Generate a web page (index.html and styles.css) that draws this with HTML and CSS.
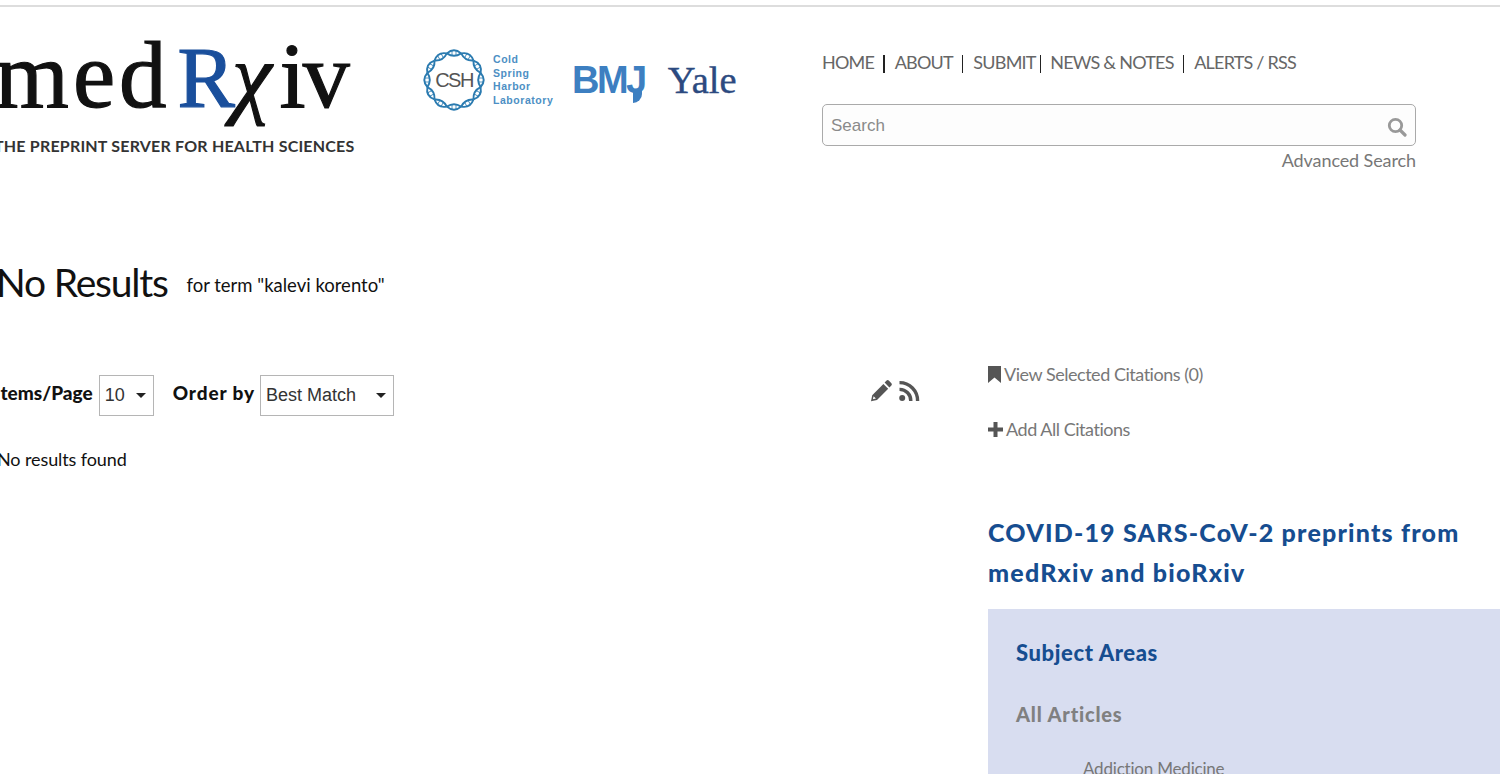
FILE: index.html
```html
<!DOCTYPE html>
<html lang="en">
<head>
<meta charset="utf-8">
<title>medRxiv search</title>
<link rel="stylesheet" href="styles.css">
</head>
<body>
<div class="page">
  <header class="header">
    <div class="logo">
      <div class="wordmark"><span class="wm-med">med</span><span class="wm-r">R</span><span class="wm-chi">χ</span><span class="wm-iv">iv</span></div>
      <div class="tagline">THE PREPRINT SERVER FOR HEALTH SCIENCES</div>
    </div>
    <div class="partners">
      <svg class="csh-ring" width="64" height="64" viewBox="-32 -32 64 64" aria-hidden="true">
        <defs>
          <g id="eye" fill="none" stroke="#2b7bb0" stroke-width="1.9">
            <path d="M-7.1 -26.6Q0 -32.8 7.1 -26.6"/>
            <path d="M-7.1 -26.6Q0 -21.8 7.1 -26.6"/>
            <path d="M-2 -29.2V-24.6M2 -29.2V-24.6" stroke-width=".8"/>
          </g>
        </defs>
        <use href="#eye"/><use href="#eye" transform="rotate(30)"/><use href="#eye" transform="rotate(60)"/>
        <use href="#eye" transform="rotate(90)"/><use href="#eye" transform="rotate(120)"/><use href="#eye" transform="rotate(150)"/>
        <use href="#eye" transform="rotate(180)"/><use href="#eye" transform="rotate(210)"/><use href="#eye" transform="rotate(240)"/>
        <use href="#eye" transform="rotate(270)"/><use href="#eye" transform="rotate(300)"/><use href="#eye" transform="rotate(330)"/>
        <text class="csh-text" x="0" y="7" text-anchor="middle">CSH</text>
      </svg>
      <div class="csh-name">Cold<br>Spring<br>Harbor<br>Laboratory</div>
      <div class="bmj">BMJ</div>
      <div class="yale">Yale</div>
    </div>
    <div class="tools">
      <nav class="nav">
        <a>HOME</a><i class="sep sep-a"></i>
        <a>ABOUT</a><i class="sep sep-a"></i>
        <a>SUBMIT</a><i class="sep sep-b"></i>
        <a>NEWS &amp; NOTES</a><i class="sep sep-a"></i>
        <a>ALERTS / RSS</a>
      </nav>
      <div class="search">
        <input class="search-input" type="text" placeholder="Search">
        <svg class="search-icon" width="20" height="20" viewBox="0 0 20 20" aria-hidden="true">
          <circle cx="8.500" cy="8.500" r="6.200" fill="none" stroke="#999" stroke-width="2.800"/>
          <path d="M13 13l5 5" stroke="#999" stroke-width="3.200" stroke-linecap="round"/>
        </svg>
      </div>
      <a class="advanced">Advanced Search</a>
    </div>
  </header>

  <h1 class="title">No Results <small class="term">for term "kalevi korento"</small></h1>

  <div class="columns">
    <main class="results">
      <div class="toolbar">
        <label class="field-label">Items/Page</label>
        <div class="select select-num"><span>10</span><i class="caret"></i></div>
        <label class="field-label order">Order by</label>
        <div class="select select-order"><span>Best Match</span><i class="caret"></i></div>
        <div class="feeds">
          <svg width="23" height="23" viewBox="0 0 23 23" aria-hidden="true">
            <path fill="#555" d="M16.600 1.600a1.600 1.600 0 0 1 2.200 0l2.600 2.600a1.600 1.600 0 0 1 0 2.200l-2 2-4.800-4.800zM13.400 5l4.800 4.800L7 21l-6 1.200L2.200 16.200zM3.600 17.200l-.7 3 3-.7z"/>
          </svg>
          <svg width="22" height="22" viewBox="0 0 22 22" aria-hidden="true">
            <circle cx="4.200" cy="18" r="3" fill="#555"/>
            <path d="M1.500 9.400A11.200 11.200 0 0 1 12.800 21" fill="none" stroke="#555" stroke-width="3.400"/>
            <path d="M1.500 2.600A18 18 0 0 1 19.600 21" fill="none" stroke="#555" stroke-width="3.400"/>
          </svg>
        </div>
      </div>
      <p class="empty">No results found</p>
    </main>
    <aside class="side">
      <a class="cite">
        <svg width="13" height="17" viewBox="0 0 13 17" aria-hidden="true"><path fill="#555" d="M0 0h13v17L6.500 11.500 0 17z"/></svg>
        View Selected Citations (0)
      </a>
      <a class="cite cite-add">
        <svg width="15" height="15" viewBox="0 0 15 15" aria-hidden="true"><path fill="#555" d="M5.500 0h4v5.500H15v4H9.500V15h-4V9.500H0v-4h5.500z"/></svg>
        Add All Citations
      </a>
      <h2 class="covid">COVID-19 SARS-CoV-2 preprints from medRxiv and bioRxiv</h2>
      <section class="panel">
        <h3 class="panel-title">Subject Areas</h3>
        <h4 class="panel-all">All Articles</h4>
        <a class="panel-item">Addiction Medicine</a>
      </section>
    </aside>
  </div>
</div>
</body>
</html>
```
FILE: styles.css
```css
html, body {
  margin: 0;
  height: 100%;
  overflow: hidden;
  background: #fff;
}
.page {
  height: 774px;
  overflow: hidden;
  font-family: Lato, "Open Sans", sans-serif;
  color: #111;
  border-top: 2px solid #ddd;
  margin-top: 5px;
  box-sizing: border-box;
}
.header {
  display: flex;
  align-items: flex-start;
  height: 250px;
}
.logo {
  width: 400px;
  margin-left: -5px;
  flex: none;
  padding-top: 22px;
}
.wordmark {
  font-family: "Liberation Serif", serif;
  font-size: 90px;
  line-height: 92px;
  color: #111;
  white-space: nowrap;
  -webkit-text-stroke: 1.200px currentColor;
}
.wm-med {
  font-size: 95px;
  letter-spacing: 4px;
}
.wm-r {
  color: #1a4f9c;
  font-size: 86px;
  margin-left: 7px;
}
.wm-chi {
  font-style: italic;
  margin-left: -3px;
  margin-right: 8px;
}
.wm-iv {
  font-size: 94px;
  letter-spacing: -3px;
}
.tagline {
  font-size: 16px;
  font-weight: 700;
  color: #333;
  white-space: nowrap;
  line-height: 20px;
  letter-spacing: .2px;
  margin-top: 12px;
  margin-left: -1px;
}
.partners {
  display: flex;
  align-items: center;
  flex: none;
  width: 400px;
  margin-left: 27px;
  padding-top: 41px;
}
.csh-ring { flex: none; }
.csh-text {
  font-family: "Liberation Sans", sans-serif;
  font-size: 20px;
  fill: #555;
  letter-spacing: -1.500px;
}
.csh-name {
  font-family: "Liberation Sans", sans-serif;
  font-size: 10.500px;
  font-weight: 700;
  line-height: 13.500px;
  letter-spacing: .55px;
  color: #4d8fc4;
  margin-left: 7px;
  width: 62px;
  flex: none;
}
.bmj {
  position: relative;
  font-family: "Liberation Sans", sans-serif;
  font-size: 38px;
  font-weight: 700;
  color: #3d7fc1;
  letter-spacing: -2.500px;
  margin-left: 17px;
  line-height: 50px;
  flex: none;
}
.bmj::after {
  content: "";
  position: absolute;
  right: 3px;
  top: 36px;
  width: 9px;
  height: 12px;
  background: #3d7fc1;
  border-bottom-right-radius: 10px;
}
.yale {
  font-family: "Liberation Serif", serif;
  font-size: 38.500px;
  color: #2c4a80;
  -webkit-text-stroke: .4px currentColor;
  margin-left: 23px;
  line-height: 50px;
  flex: none;
}
.tools {
  width: 594px;
  flex: none;
  display: flex;
  flex-direction: column;
  padding-top: 42px;
}
.nav {
  display: flex;
  align-items: center;
  height: 26px;
  font-size: 18px;
  color: #666;
  white-space: nowrap;
  letter-spacing: -.78px;
}
.sep {
  display: block;
  width: 1.500px;
  height: 18px;
  background: #222;
  margin-top: 4px;
}
.sep-a { margin-left: 9px; margin-right: 10px; }
.sep-b { margin-left: 4px; margin-right: 9px; }
.search {
  position: relative;
  margin-top: 29px;
}
.search-input {
  display: block;
  box-sizing: border-box;
  width: 100%;
  height: 42px;
  border: 1px solid #aaa;
  border-radius: 5px;
  background: #fdfdfd;
  font-family: "Liberation Sans", sans-serif;
  font-size: 17px;
  padding: 2px 8px 0;
  color: #333;
}
.search-input::placeholder { color: #8a8a8a; opacity: 1; }
.search-icon {
  position: absolute;
  right: 9px;
  top: 13px;
}
.advanced {
  align-self: flex-end;
  font-size: 18px;
  line-height: 24px;
  margin-top: 2px;
  color: #777;
  letter-spacing: -.1px;
}
.title {
  margin: 0 0 0 -4px;
  height: 118px;
  padding-top: 1px;
  box-sizing: border-box;
  font-size: 39px;
  font-weight: 400;
  line-height: 48px;
  color: #111;
  letter-spacing: -1.200px;
  white-space: nowrap;
}
.term {
  font-size: 18.500px;
  margin-left: 10px;
  letter-spacing: 0;
  vertical-align: 5px;
}
.columns {
  display: flex;
  align-items: flex-start;
}
.results {
  width: 925px;
  flex: none;
  margin-left: -5px;
  box-sizing: border-box;
}
.toolbar {
  display: flex;
  align-items: center;
  height: 41px;
}
.field-label {
  font-size: 19px;
  font-weight: 900;
  color: #111;
  margin-right: 6px;
  padding-bottom: 6px;
}
.order {
  margin-left: 19px;
  margin-right: 5px;
  letter-spacing: .9px;
}
.select {
  box-sizing: border-box;
  height: 41px;
  display: flex;
  align-items: center;
  justify-content: space-between;
  border: 1px solid #b5b5b5;
  font-family: "Liberation Sans", sans-serif;
  font-size: 18px;
  color: #333;
  padding: 0 7px 0 5px;
  background: #fff;
}
.select-num { width: 55px; }
.select-order { width: 134px; }
.caret {
  display: block;
  border-top: 5px solid #222;
  border-left: 5.500px solid transparent;
  border-right: 5.500px solid transparent;
}
.feeds {
  margin-left: auto;
  display: flex;
  align-items: center;
  gap: 5px;
  padding-bottom: 10px;
}
.empty {
  margin: 30px 0 0 2px;
  font-size: 18px;
  line-height: 26px;
  color: #111;
  letter-spacing: -.1px;
}
.side {
  margin-left: 68px;
  flex: 1;
  min-width: 0;
  margin-top: -14px;
}
.cite {
  display: flex;
  align-items: center;
  gap: 3px;
  font-size: 18px;
  line-height: 26px;
  color: #777;
  letter-spacing: -.47px;
}
.cite-add { margin-top: 29px; }
.covid {
  margin: 70px 0 0;
  font-size: 25px;
  font-weight: 900;
  line-height: 40px;
  color: #164d90;
  width: 510px;
  letter-spacing: 1.200px;
}
.panel {
  margin-top: 17px;
  height: 200px;
  background: #d8ddf0;
  padding: 28px;
  box-sizing: border-box;
}
.panel-title {
  margin: 0;
  font-size: 22px;
  font-weight: 900;
  line-height: 32px;
  color: #164d90;
  letter-spacing: .6px;
}
.panel-all {
  margin: 29px 0 0;
  font-size: 20px;
  font-weight: 900;
  line-height: 32px;
  color: #808080;
  letter-spacing: .8px;
}
.panel-item {
  display: block;
  margin: 27px 0 0 67px;
  font-size: 17px;
  line-height: 24px;
  color: #777;
  letter-spacing: -.2px;
}
```
